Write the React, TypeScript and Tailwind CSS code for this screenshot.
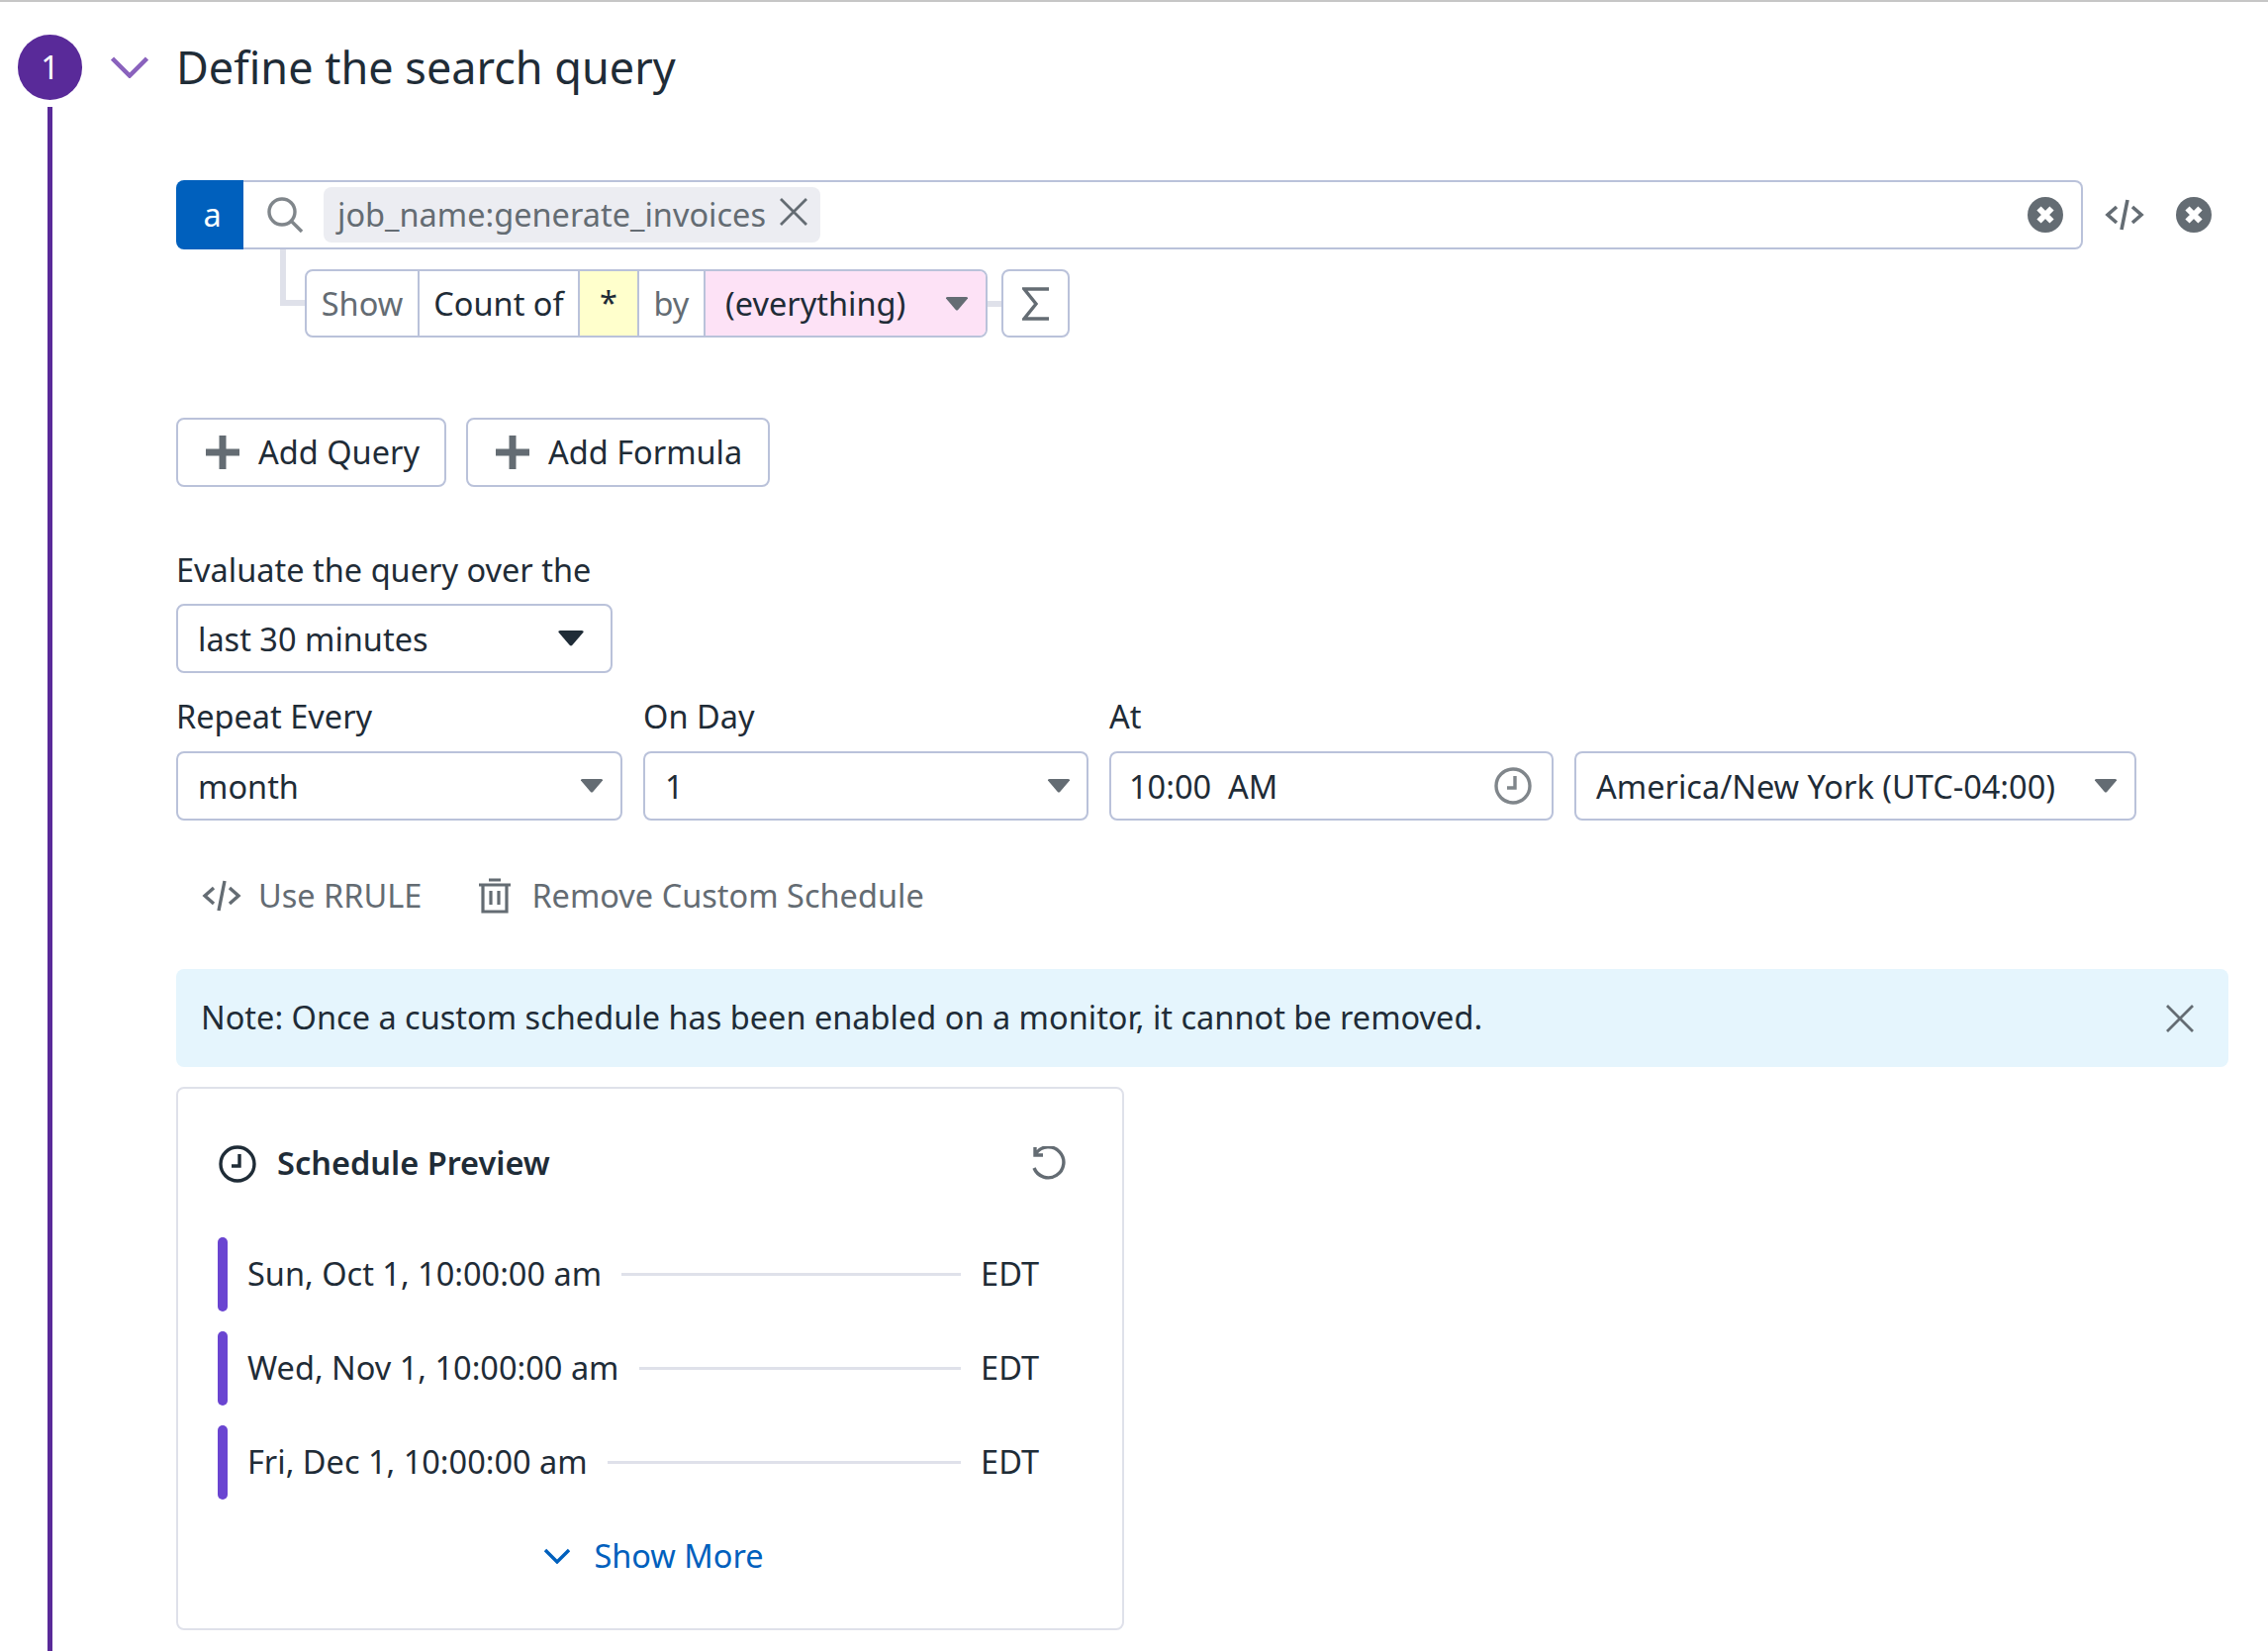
const FONT = "font-['Noto_Sans','Open_Sans',sans-serif]";

function Caret({ className }: { className: string }) {
  return (
    <svg viewBox="0 0 24 14" className={className} fill="currentColor">
      <path d="M1 1.5 Q0.5 0 2.5 0 H21.5 Q23.5 0 23 1.5 L13.2 13 Q12 14 10.8 13 Z" />
    </svg>
  );
}

function ClearIcon({ className }: { className?: string }) {
  return (
    <svg viewBox="0 0 36 36" className={className}>
      <circle cx="18" cy="18" r="18" fill="#646c73" />
      <path d="M11.5 11.5 L24.5 24.5 M24.5 11.5 L11.5 24.5" stroke="#fff" strokeWidth="6" />
    </svg>
  );
}

function CodeIcon({ className, w = 3.6 }: { className?: string; w?: number }) {
  return (
    <svg viewBox="0 0 40 32" className={className} fill="none" stroke="currentColor" strokeWidth={w}>
      <path d="M12 8 L3 16 L12 24 M28 8 L37 16 L28 24 M23 1 L17 31" />
    </svg>
  );
}

function Plus() {
  return (
    <svg viewBox="0 0 34 34" className="w-[34px] h-[34px] text-[#646c73]" fill="currentColor">
      <path d="M13.5 0 h7 v13.5 H34 v7 H20.5 V34 h-7 V20.5 H0 v-7 h13.5 Z" />
    </svg>
  );
}

function ClockIcon({ className, sw = 3.4 }: { className?: string; sw?: number }) {
  return (
    <svg viewBox="0 0 38 38" className={className} fill="none" stroke="currentColor" strokeWidth={sw}>
      <circle cx="19" cy="19" r="17" />
      <path d="M21 9 V21 H13" />
    </svg>
  );
}

function SelectBox({ w, label, dark, pr }: { w: string; label: string; dark?: boolean; pr: string }) {
  return (
    <div className={`${w} ${pr} h-[70px] shrink-0 rounded-[8px] border-2 border-[#bac2da] bg-white flex items-center justify-between pl-[20px] text-[32.5px] text-[#1f2c37]`}>
      <span className="translate-y-[1px]">{label}</span>
      {dark ? (
        <Caret className="w-[28px] h-[16px] text-[#1f2c37]" />
      ) : (
        <Caret className="w-[24px] h-[14px] text-[#646c73]" />
      )}
    </div>
  );
}

function Row({ text }: { text: string }) {
  return (
    <div className="flex items-center h-[75px] gap-[20px]">
      <div className="w-[10px] h-[75px] rounded-full bg-[#6a45d1]" />
      <div className="flex-1 flex items-center gap-[20px] pr-[46px]">
        <span className="text-[32.5px] text-[#1f2c37] whitespace-nowrap">{text}</span>
        <div className="flex-1 h-[3px] bg-[#dfe1ea]" />
        <span className="text-[32.5px] text-[#1f2c37]">EDT</span>
      </div>
    </div>
  );
}

export default function App() {
  return (
    <div className={`${FONT} w-[2292px] h-[1668px] overflow-hidden bg-white border-t-2 border-[#c6c6c6] flex`}>
      {/* step rail */}
      <div className="w-[101px] shrink-0 flex flex-col items-center pt-[33px]">
        <div className="w-[65px] h-[66px] rounded-full bg-[#592a99] text-white text-[32.5px] flex items-center justify-center">1</div>
        <div className="w-[5px] flex-1 mt-[7px] bg-[#592a99]" />
      </div>

      <div className="flex-1 min-w-0">
        {/* title */}
        <div className="flex items-center h-[66px] mt-[33px]">
          <svg viewBox="0 0 38 22" className="w-[38px] h-[22px] ml-[11px] text-[#8a62bd]" fill="none" stroke="currentColor" strokeWidth="4.5">
            <path d="M1.5 2 L19 19.5 L36.5 2" />
          </svg>
          <h1 className="ml-[28px] text-[45px] text-[#1f2c37] leading-none -translate-y-[1px]">Define the search query</h1>
        </div>

        {/* query */}
        <div className="ml-[77px] mt-[81px] flex items-center">
          <div className="w-[1927px] h-[70px] flex">
            <div className="w-[68px] h-[70px] rounded-l-[8px] bg-[#0060bd] text-white text-[32.5px] flex items-center justify-center pl-[5px]">a</div>
            <div className="flex-1 flex items-center pl-[24px] pr-[18px] border-y-2 border-r-2 border-[#bac2da] rounded-r-[8px]">
              <svg viewBox="0 0 36 36" className="w-[36px] h-[36px] text-[#80868b]" fill="none" stroke="currentColor" strokeWidth="3.4">
                <circle cx="15" cy="15" r="13" />
                <path d="M24.5 24.5 L35 35" />
              </svg>
              <div className="ml-[21px] h-[56px] rounded-[8px] bg-[#ecedf2] flex items-center pl-[14px] pr-[13px] text-[32.5px] text-[#646c73]">
                <span>job_name:generate_invoices</span>
                <svg viewBox="0 0 28 28" className="ml-[14px] w-[28px] h-[28px] -translate-y-[3px] text-[#646c73]" fill="none" stroke="currentColor" strokeWidth="2.8">
                  <path d="M1 1 L27 27 M27 1 L1 27" />
                </svg>
              </div>
              <ClearIcon className="ml-auto w-[36px] h-[36px]" />
            </div>
          </div>
          <CodeIcon className="ml-[22px] w-[40px] h-[32px] text-[#646c73]" />
          <ClearIcon className="ml-[32px] w-[36px] h-[36px]" />
        </div>

        {/* aggregation */}
        <div className="relative ml-[207px] mt-[20px] flex items-center h-[69px]">
          <div className="absolute -left-[25px] -top-[20px] w-[25px] h-[57px] border-l-[6px] border-b-[6px] border-[#dfe1ea]" />
          <div className="flex h-[69px] rounded-[8px] border-2 border-[#bac2da] overflow-hidden text-[32.5px]">
            <div className="w-[114px] pt-[1px] flex items-center justify-center text-[#646c73] border-r-2 border-[#bac2da]">Show</div>
            <div className="w-[162px] pt-[1px] flex items-center justify-center text-[#1f2c37] border-r-2 border-[#bac2da]">Count of</div>
            <div className="w-[60px] flex items-center justify-center text-[#1f2c37] bg-[#ffffcc] border-r-2 border-[#bac2da]">*</div>
            <div className="w-[67px] pt-[1px] flex items-center justify-center text-[#646c73] border-r-2 border-[#bac2da]">by</div>
            <div className="w-[283px] pt-[1px] flex items-center justify-between pl-[20px] pr-[17px] bg-[#fde2f6] text-[#1f2c37]">
              <span>(everything)</span>
              <Caret className="w-[24px] h-[14px] text-[#646c73]" />
            </div>
          </div>
          <div className="w-[14px] h-[6px] bg-[#dfe1ea]" />
          <div className="w-[69px] h-[69px] rounded-[8px] border-2 border-[#bac2da] flex items-center justify-center text-[#646c73]">
            <svg viewBox="0 0 28 36" className="w-[28px] h-[36px]" fill="none" stroke="currentColor" strokeWidth="3.4">
              <path d="M27 3 H2 L14 18 L2 33 H27" />
            </svg>
          </div>
        </div>

        {/* add buttons */}
        <div className="ml-[77px] mt-[81px] flex gap-[20px]">
          <div className="w-[273px] h-[70px] rounded-[8px] border-2 border-[#bac2da] flex items-center pl-[28px] gap-[19px] text-[32.5px] text-[#1f2c37]">
            <Plus /><span>Add Query</span>
          </div>
          <div className="w-[307px] h-[70px] rounded-[8px] border-2 border-[#bac2da] flex items-center pl-[28px] gap-[19px] text-[32.5px] text-[#1f2c37]">
            <Plus /><span>Add Formula</span>
          </div>
        </div>

        {/* evaluate */}
        <div className="ml-[77px] mt-[59px] text-[32.5px] leading-[50px] text-[#1f2c37]">Evaluate the query over the</div>
        <div className="ml-[77px] mt-[9px]">
          <SelectBox w="w-[441px]" pr="pr-[26px]" label="last 30 minutes" dark />
        </div>

        {/* schedule */}
        <div className="ml-[77px] mt-[19px] flex gap-[21px] text-[32.5px] leading-[50px] text-[#1f2c37]">
          <div className="w-[451px]">Repeat Every</div>
          <div className="w-[450px]">On Day</div>
          <div className="w-[449px]">At</div>
        </div>
        <div className="ml-[77px] mt-[10px] flex gap-[21px]">
          <SelectBox w="w-[451px]" pr="pr-[17px]" label="month" />
          <SelectBox w="w-[450px]" pr="pr-[16px]" label="1" />
          <div className="w-[449px] h-[70px] rounded-[8px] border-2 border-[#bac2da] flex items-center justify-between pl-[18px] pr-[20px] text-[32.5px] text-[#1f2c37]">
            <span className="whitespace-pre translate-y-[1px]">10:00  AM</span>
            <ClockIcon className="w-[38px] h-[38px] text-[#80868b]" />
          </div>
          <SelectBox w="w-[568px]" pr="pr-[17px]" label="America/New York (UTC-04:00)" />
        </div>

        {/* links */}
        <div className="ml-[103px] mt-[51px] flex items-center text-[32.5px] leading-[50px] text-[#646c73]">
          <CodeIcon className="w-[40px] h-[36px]" w={3.4} />
          <span className="ml-[17px]">Use RRULE</span>
          <svg viewBox="0 0 32 36" className="ml-[58px] w-[32px] h-[36px]" fill="none" stroke="currentColor" strokeWidth="3.2">
            <path d="M0 7 H32 M10 2 H22 M4 7 V34 H28 V7 M12 13 V27 M20 13 V27" />
          </svg>
          <span className="ml-[21px]">Remove Custom Schedule</span>
        </div>

        {/* note */}
        <div className="ml-[77px] mt-[49px] w-[2074px] h-[99px] rounded-[8px] bg-[#e5f5fd] flex items-center justify-between pl-[25px] pr-[35px] text-[32.5px] text-[#1f2c37]">
          <span>Note: Once a custom schedule has been enabled on a monitor, it cannot be removed.</span>
          <svg viewBox="0 0 28 28" className="w-[28px] h-[28px] text-[#646c73]" fill="none" stroke="currentColor" strokeWidth="2.8">
            <path d="M1 1 L27 27 M27 1 L1 27" />
          </svg>
        </div>

        {/* preview */}
        <div className="ml-[77px] mt-[20px] w-[958px] h-[549px] rounded-[8px] border-2 border-[#dfe1ea] pl-[40px] pr-[38px] pt-[53px]">
          <div className="flex items-center justify-between h-[46px]">
            <div className="flex items-center gap-[21px] pl-[1px]">
              <ClockIcon className="w-[38px] h-[38px] text-[#1f2c37]" />
              <span className="text-[32.5px] font-semibold text-[#1f2c37] -translate-y-[1px]">Schedule Preview</span>
            </div>
            <svg viewBox="0 0 36 36" className="w-[36px] h-[36px] mr-[19px] text-[#646c73]" fill="none" stroke="currentColor" strokeWidth="3.4">
              <path d="M6 7 A15.5 15.5 0 1 1 4 22 M5 1 V9 H13" />
            </svg>
          </div>
          <div className="mt-[51px] flex flex-col gap-[20px]">
            <Row text="Sun, Oct 1, 10:00:00 am" />
            <Row text="Wed, Nov 1, 10:00:00 am" />
            <Row text="Fri, Dec 1, 10:00:00 am" />
          </div>
          <div className="mt-[33px] flex items-center justify-center gap-[24px] text-[32.5px] text-[#0060bd] ml-[6px]">
            <svg viewBox="0 0 26 16" className="w-[26px] h-[16px]" fill="none" stroke="currentColor" strokeWidth="3.4">
              <path d="M1 2 L13 14 L25 2" />
            </svg>
            <span>Show More</span>
          </div>
        </div>
      </div>
    </div>
  );
}
